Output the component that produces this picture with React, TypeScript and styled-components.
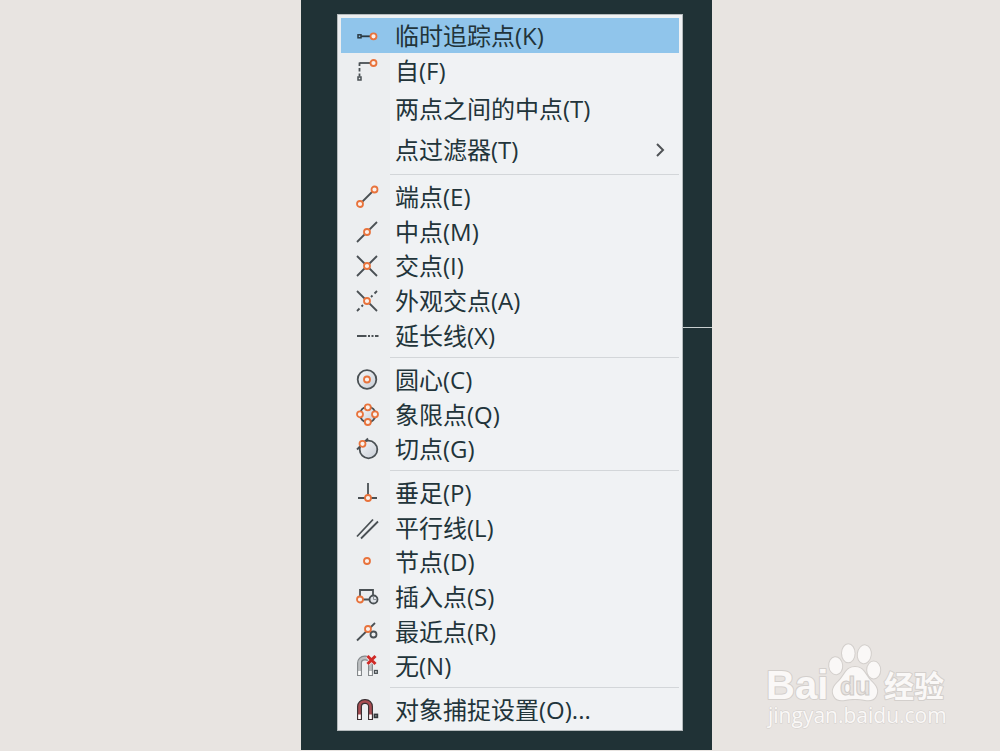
import React from "react";
import styled, { createGlobalStyle } from "styled-components";

const Global = createGlobalStyle`
  *, *::before, *::after { box-sizing: border-box; }
  body {
    margin: 0;
    background: #e8e4e1;
    font-family: "Open Sans", "Noto Sans CJK SC", sans-serif;
  }
`;

const Page = styled.main`
  position: relative;
  display: grid;
  grid-template-columns: 301fr 411px 288fr;
  min-height: 100vh;
  padding-bottom: 1px;
`;

const Canvas = styled.section`
  position: relative;
  grid-column: 2;
  padding: 14px 29px 19px 36px;
  background: #203236;
`;

const Crosshair = styled.div`
  position: absolute;
  top: 327px;
  right: 0;
  left: 50%;
  height: 1px;
  background: #c9cfd0;
`;

const Menu = styled.nav`
  position: relative;
  padding: 3px;
  border: 1px solid #b4babc;
  background: linear-gradient(to right, #eceef0 52px, #f0f2f4 52px);
`;

const Group = styled.ul`
  margin: 0;
  padding: 0;
  list-style: none;
`;

const Row = styled.li<{ $tall?: boolean }>`
  height: ${(p) => (p.$tall ? 41 : 35)}px;

  ${Group} > &:nth-child(3n) {
    height: ${(p) => (p.$tall ? 41 : 34)}px;
  }
`;

const Item = styled.button<{ $active?: boolean }>`
  display: flex;
  align-items: center;
  width: 100%;
  height: 100%;
  padding: 0 12px 0 14px;
  border: 0;
  background: ${(p) => (p.$active ? "#90c5eb" : "transparent")};
  color: #22343a;
  font: inherit;
  font-size: 24px;
  line-height: 32px;
  text-align: left;
  white-space: nowrap;
`;

const Icon = styled.svg`
  flex: none;
  width: 24px;
  height: 24px;
  margin-right: 16px;
  fill: none;
  stroke: #4a5054;
  stroke-width: 1.8;
`;

const Label = styled.span`
  flex: 1;
`;

const Arrow = styled.svg`
  flex: none;
  width: 12px;
  height: 16px;
  fill: none;
  stroke: #505356;
  stroke-width: 2;
`;

const Divider = styled.hr`
  height: 1px;
  margin: 4px 0 4px 49px;
  border: 0;
  background: #d3d6d9;
`;

const Watermark = styled.svg`
  position: absolute;
  right: 50px;
  bottom: 15px;
  width: 190px;
  height: 96px;
`;

const Dot = ({ x, y, r = 3 }: { x: number; y: number; r?: number }) => (
  <circle cx={x} cy={y} r={r} stroke="#e8733c" strokeWidth="1.8" fill="#fbf1ec" />
);

const icons: Record<string, React.ReactNode> = {
  track: (
    <>
      <path d="M6 12.300h10" stroke="#2b3a42" />
      <rect x="3" y="10.800" width="3" height="3" strokeWidth="1.500" stroke="#2b3a42" />
      <Dot x={18.5} y={12.3} />
    </>
  ),
  from: (
    <>
      <path d="M4.500 4H16" />
      <path d="M4.500 3.500v14" strokeDasharray="3.500 2" />
      <rect x="3" y="18" width="3" height="3" strokeWidth="1.500" />
      <Dot x={18.5} y={4} />
    </>
  ),
  end: (
    <>
      <path d="M5 19 19 5" />
      <Dot x={5} y={19} />
      <Dot x={19.5} y={4.5} />
    </>
  ),
  mid: (
    <>
      <path d="M2 22 22 2" />
      <Dot x={12} y={12} />
    </>
  ),
  cross: (
    <>
      <path d="M2 2 22 22M2 22 22 2" />
      <Dot x={12} y={12} />
    </>
  ),
  apparent: (
    <>
      <path d="M2 2 22 22" />
      <path d="M22 2l-2.500 2.500M17.500 6.500l-1.500 1.500M8 16l-1.500 1.500M4.500 19.500 2 22" />
      <Dot x={12} y={12} />
    </>
  ),
  extension: <path d="M2 12h9.500m1.500 0h2m1.500 0h2m1.500 0h3.500" />,
  center: (
    <>
      <circle cx="12" cy="11.500" r="9.300" fill="url(#shade)" />
      <Dot x={12} y={11.5} />
    </>
  ),
  quadrant: (
    <>
      <circle cx="12.800" cy="11.500" r="7.800" fill="url(#shade)" />
      <Dot x={12.8} y={4.3} />
      <Dot x={5} y={11.3} />
      <Dot x={20} y={11.3} />
      <Dot x={12.8} y={19} />
    </>
  ),
  tangent: (
    <>
      <circle cx="13.500" cy="12.500" r="8.800" fill="url(#shade)" />
      <path d="M2 12.500 13 1.500" />
      <Dot x={7.5} y={6.8} />
    </>
  ),
  perpendicular: (
    <>
      <path d="M13 2v14M3 17h19" />
      <Dot x={13} y={17} />
    </>
  ),
  parallel: <path d="M2 20.500 18 3.500M6 22.500 23 5.500" />,
  node: <Dot x={12} y={11} />,
  insert: (
    <>
      <path d="M5 14V5h13v6M8 14.500h8" />
      <circle cx="18.500" cy="14.500" r="4" fill="#dfe3e8" />
      <path d="M18.500 14.500v-3M18.500 14.500h3" strokeWidth="1" stroke="#8a9096" />
      <Dot x={5} y={14.5} />
    </>
  ),
  nearest: (
    <>
      <path d="M2 20.500 20 3" />
      <circle cx="18.500" cy="14.500" r="3" fill="#eceef0" />
      <Dot x={13} y={9} />
    </>
  ),
  none: (
    <>
      <path d="M4.500 22V9a5 5 0 0 1 5-5h1a5 5 0 0 1 5 5v13" stroke="#85898c" strokeWidth="5" />
      <path d="M4.500 21V9a5 5 0 0 1 5-5h1a5 5 0 0 1 5 5v12" stroke="#bdc0c2" strokeWidth="2.600" />
      <path d="M4.500 17v4M15.500 17v4" stroke="#fff" strokeWidth="2.600" />
      <path d="m12.500 2 8 8M20.500 2l-8 8" stroke="#eceef0" strokeWidth="4.500" />
      <path d="m12.500 2 8 8M20.500 2l-8 8" stroke="#cf2a27" strokeWidth="3" />
      <rect x="19.500" y="16.500" width="2.800" height="2.800" strokeWidth="1.300" />
    </>
  ),
  settings: (
    <>
      <path d="M4.500 22V8.500a5 5 0 0 1 5-5h1a5 5 0 0 1 5 5V22" stroke="#3b3033" strokeWidth="5" />
      <path d="M4.500 21V8.500a5 5 0 0 1 5-5h1a5 5 0 0 1 5 5V21" stroke="#a94d52" strokeWidth="2.600" />
      <path d="M4.500 16.500V21M15.500 16.500V21" stroke="#fff" strokeWidth="2.600" />
      <rect x="19.500" y="16.500" width="2.800" height="2.800" strokeWidth="1.800" stroke="#33383b" />
    </>
  ),
};

type Entry = { label: string; icon?: string; tall?: boolean; active?: boolean; submenu?: boolean };

const groups: Entry[][] = [
  [
    { label: "临时追踪点(K)", icon: "track", active: true },
    { label: "自(F)", icon: "from" },
    { label: "两点之间的中点(T)", tall: true },
    { label: "点过滤器(T)", tall: true, submenu: true },
  ],
  [
    { label: "端点(E)", icon: "end" },
    { label: "中点(M)", icon: "mid" },
    { label: "交点(I)", icon: "cross" },
    { label: "外观交点(A)", icon: "apparent" },
    { label: "延长线(X)", icon: "extension" },
  ],
  [
    { label: "圆心(C)", icon: "center" },
    { label: "象限点(Q)", icon: "quadrant" },
    { label: "切点(G)", icon: "tangent" },
  ],
  [
    { label: "垂足(P)", icon: "perpendicular" },
    { label: "平行线(L)", icon: "parallel" },
    { label: "节点(D)", icon: "node" },
    { label: "插入点(S)", icon: "insert" },
    { label: "最近点(R)", icon: "nearest" },
    { label: "无(N)", icon: "none" },
  ],
  [{ label: "对象捕捉设置(O)...", icon: "settings" }],
];

const BaiduMark = () => (
  <Watermark viewBox="0 0 190 96" role="img" aria-label="Baidu 经验">
    <g fill="#faf8f7" stroke="#d3cfcc" strokeWidth="2" paintOrder="stroke" strokeLinejoin="round">
      <text x="6" y="59" fontFamily="Liberation Sans, sans-serif" fontWeight="700" fontSize="40">Bai</text>
      <ellipse cx="75.700" cy="25.700" rx="6.500" ry="8.500" transform="rotate(-6 75.700 25.700)" />
      <ellipse cx="88.300" cy="13.300" rx="6.300" ry="9" />
      <ellipse cx="104.300" cy="14.300" rx="6.500" ry="9" transform="rotate(8 104.300 14.300)" />
      <ellipse cx="113.700" cy="30" rx="6.500" ry="8.500" />
      <path d="M95 27c-9 0-10 8-16 14-5 5-8 9-5 15 2 4 6 5 11 4 4-1 6-1 10-1s6 0 10 1c5 1 9 0 11-4 3-6 0-10-5-15-6-6-7-14-16-14z" />
      <text x="124" y="57" fontFamily="Noto Sans CJK SC, sans-serif" fontWeight="700" fontSize="30">经验</text>
      <text x="8" y="83" fontFamily="Open Sans, sans-serif" fontSize="21" strokeWidth="1">jingyan.baidu.com</text>
    </g>
    <text x="80" y="55" fontFamily="Liberation Sans, sans-serif" fontWeight="700" fontSize="25" fill="#e8e4e1" stroke="#cfcbc8">du</text>
  </Watermark>
);

const Defs = styled.svg`
  position: absolute;
  width: 0;
  height: 0;
`;

export default function App() {
  return (
    <Page>
      <Global />
      <Defs aria-hidden="true">
        <linearGradient id="shade" x1="0" y1="0" x2="1" y2="1">
          <stop offset="0" stopColor="#f8f9fb" />
          <stop offset="1" stopColor="#c6ccd5" />
        </linearGradient>
      </Defs>
      <Canvas>
        <Crosshair />
        <Menu>
          {groups.map((group, i) => (
            <React.Fragment key={i}>
              {i > 0 && <Divider />}
              <Group>
                {group.map((e) => (
                  <Row key={e.label} $tall={e.tall}>
                    <Item type="button" $active={e.active}>
                      <Icon viewBox="0 0 24 24" aria-hidden="true">{e.icon && icons[e.icon]}</Icon>
                      <Label>{e.label}</Label>
                      {e.submenu && (
                        <Arrow viewBox="0 0 12 16" aria-hidden="true">
                          <path d="m2 2 6 6-6 6" />
                        </Arrow>
                      )}
                    </Item>
                  </Row>
                ))}
              </Group>
            </React.Fragment>
          ))}
        </Menu>
      </Canvas>
      <BaiduMark />
    </Page>
  );
}
